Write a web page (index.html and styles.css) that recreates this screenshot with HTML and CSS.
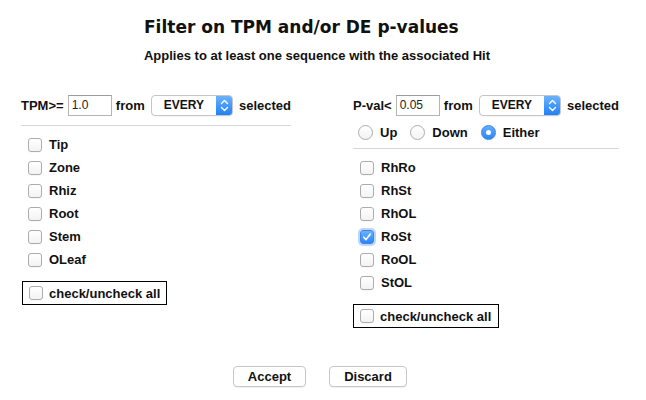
FILE: index.html
```html
<!DOCTYPE html>
<html lang="en">
<head>
<meta charset="utf-8">
<title>Filter on TPM and/or DE p-values</title>
<link rel="stylesheet" href="styles.css">
</head>
<body>
<div class="dialog">
  <header class="head">
    <div class="head-inner">
      <h1 class="title">Filter on TPM and/or DE p-values</h1>
      <p class="subtitle">Applies to at least one sequence with the associated Hit</p>
    </div>
  </header>

  <div class="cols">
    <section class="col col-left">
      <div class="filter-row">
        <span class="lbl">TPM&gt;=</span>
        <span class="num">1.0</span>
        <span class="from">from</span>
        <span class="select"><span class="select-text">EVERY</span><span class="stepper"><svg width="17" height="21" viewBox="0 0 17 21"><path d="M5.5 8.5 L8.5 5.5 L11.5 8.5 M5.5 12.5 L8.5 15.5 L11.5 12.5" fill="none" stroke="#fff" stroke-width="1.4" stroke-linecap="round" stroke-linejoin="round"/></svg></span></span>
        <span class="selected">selected</span>
      </div>
      <div class="sep"></div>
      <ul class="checks">
        <li class="check"><span class="box"></span>Tip</li>
        <li class="check"><span class="box"></span>Zone</li>
        <li class="check"><span class="box"></span>Rhiz</li>
        <li class="check"><span class="box"></span>Root</li>
        <li class="check"><span class="box"></span>Stem</li>
        <li class="check"><span class="box"></span>OLeaf</li>
      </ul>
      <div class="all all-left"><span class="box"></span>check/uncheck all</div>
    </section>

    <section class="col col-right">
      <div class="filter-row">
        <span class="lbl">P-val&lt;</span>
        <span class="num">0.05</span>
        <span class="from">from</span>
        <span class="select"><span class="select-text">EVERY</span><span class="stepper"><svg width="17" height="21" viewBox="0 0 17 21"><path d="M5.5 8.5 L8.5 5.5 L11.5 8.5 M5.5 12.5 L8.5 15.5 L11.5 12.5" fill="none" stroke="#fff" stroke-width="1.4" stroke-linecap="round" stroke-linejoin="round"/></svg></span></span>
        <span class="selected">selected</span>
      </div>
      <div class="radios">
        <span class="radio"><span class="dot"></span>Up</span>
        <span class="radio"><span class="dot"></span>Down</span>
        <span class="radio"><span class="dot on"></span>Either</span>
      </div>
      <div class="sep sep-right"></div>
      <ul class="checks">
        <li class="check"><span class="box"></span>RhRo</li>
        <li class="check"><span class="box"></span>RhSt</li>
        <li class="check"><span class="box"></span>RhOL</li>
        <li class="check"><span class="box on"><svg width="12" height="12" viewBox="0 0 12 12"><path d="M2.8 6.2 L5 8.6 L9.2 3.2" fill="none" stroke="#fff" stroke-width="1.6" stroke-linecap="round" stroke-linejoin="round"/></svg></span>RoSt</li>
        <li class="check"><span class="box"></span>RoOL</li>
        <li class="check"><span class="box"></span>StOL</li>
      </ul>
      <div class="all all-right"><span class="box"></span>check/uncheck all</div>
    </section>
  </div>

  <div class="actions">
    <button class="btn btn-accept">Accept</button>
    <button class="btn btn-discard">Discard</button>
  </div>
</div>
</body>
</html>
```

FILE: styles.css
```css
* { box-sizing: border-box; }

html, body {
  margin: 0;
  padding: 0;
  background: #fff;
}

body {
  width: 646px;
  height: 400px;
  overflow: hidden;
  font-family: "Liberation Sans", Arial, sans-serif;
  font-size: 13px;
  font-weight: 700;
  color: #111;
}

.dialog {
  display: flex;
  flex-direction: column;
  height: 400px;
  padding-top: 17px;
}

.head {
  display: flex;
  justify-content: center;
  padding-right: 12px;
}

.title {
  margin: 0;
  font-family: "DejaVu Sans", "Liberation Sans", sans-serif;
  font-size: 17px;
  line-height: 20px;
  font-weight: 700;
}

.subtitle {
  margin: 11px 0 0;
  font-size: 13px;
  line-height: 16px;
}

.cols {
  display: flex;
  margin-top: 30px;
  padding-left: 21px;
}

.col-left { width: 270px; }

.col-right {
  width: 266px;
  margin-left: 62px;
}

.filter-row {
  display: flex;
  align-items: center;
  height: 22px;
  white-space: nowrap;
}

.num {
  display: flex;
  align-items: center;
  width: 45px;
  height: 21px;
  margin-left: 4px;
  padding: 0 3px;
  border: 1px solid #b4b4b4;
  border-top-color: #9c9c9c;
  font-size: 12px;
  font-weight: 400;
  color: #222;
}

.from { margin-left: 4px; }

.select {
  display: flex;
  width: 84px;
  height: 21px;
  margin-left: 6px;
  border: 1px solid #c6c6c6;
  border-radius: 4px;
  background: #fff;
  box-shadow: 0 1px 0 rgba(0, 0, 0, 0.04);
  overflow: hidden;
}

.select-text {
  flex: 1;
  display: flex;
  align-items: center;
  justify-content: center;
  font-size: 12px;
}

.stepper {
  display: flex;
  width: 17px;
  margin: -1px -1px -1px 0;
  background: linear-gradient(#6fb4fd, #1c7ff8);
  border-radius: 0 4px 4px 0;
}

.selected { margin-left: 6px; }

.sep {
  height: 1px;
  margin-top: 9px;
  background: #d6d6d6;
}

.sep-right { margin-top: 4px; }

.checks {
  list-style: none;
  margin: 7px 0 0;
  padding: 0 0 0 7px;
}

.check {
  display: flex;
  align-items: center;
  gap: 7px;
  height: 23px;
}

.box {
  flex: none;
  display: flex;
  align-items: center;
  justify-content: center;
  width: 14px;
  height: 14px;
  border: 1px solid #acacac;
  border-radius: 3px;
  background: linear-gradient(#fff, #f3f3f3);
  box-shadow: 0 0.5px 0.5px rgba(0, 0, 0, 0.06);
}

.box.on {
  border-color: #3a85ea;
  background: linear-gradient(#6cb2fd, #2a86f8);
  box-shadow: 0 0 0 2px rgba(110, 165, 245, 0.45);
}

.all {
  display: flex;
  align-items: center;
  gap: 6px;
  height: 24px;
  margin: 10px 0 0 1px;
  padding-left: 6px;
  border: 1px solid #000;
}

.all-left { width: 145px; }
.all-right { width: 146px; margin-left: 0; }

.radios {
  display: flex;
  align-items: center;
  gap: 13px;
  height: 23px;
  margin-top: 5px;
  padding-left: 5px;
}

.radio {
  display: flex;
  align-items: center;
  gap: 7px;
}

.dot {
  flex: none;
  display: flex;
  align-items: center;
  justify-content: center;
  width: 15px;
  height: 15px;
  border: 1px solid #acacac;
  border-radius: 50%;
  background: linear-gradient(#fff, #f3f3f3);
}

.dot.on {
  border-color: #3a85ea;
  background: linear-gradient(#63adfc, #2a86f8);
}

.dot.on::after {
  content: "";
  width: 5px;
  height: 5px;
  border-radius: 50%;
  background: #fff;
}

.actions {
  display: flex;
  justify-content: center;
  gap: 23px;
  margin-top: 38px;
  padding-right: 6px;
}

.btn {
  height: 21px;
  padding: 0;
  border: 1px solid #c6c6c6;
  border-radius: 4px;
  background: #fff;
  box-shadow: 0 1px 0 rgba(0, 0, 0, 0.05);
  font-family: inherit;
  font-size: 13px;
  font-weight: 700;
  color: #111;
}

.btn-accept { width: 73px; }
.btn-discard { width: 78px; }
```
